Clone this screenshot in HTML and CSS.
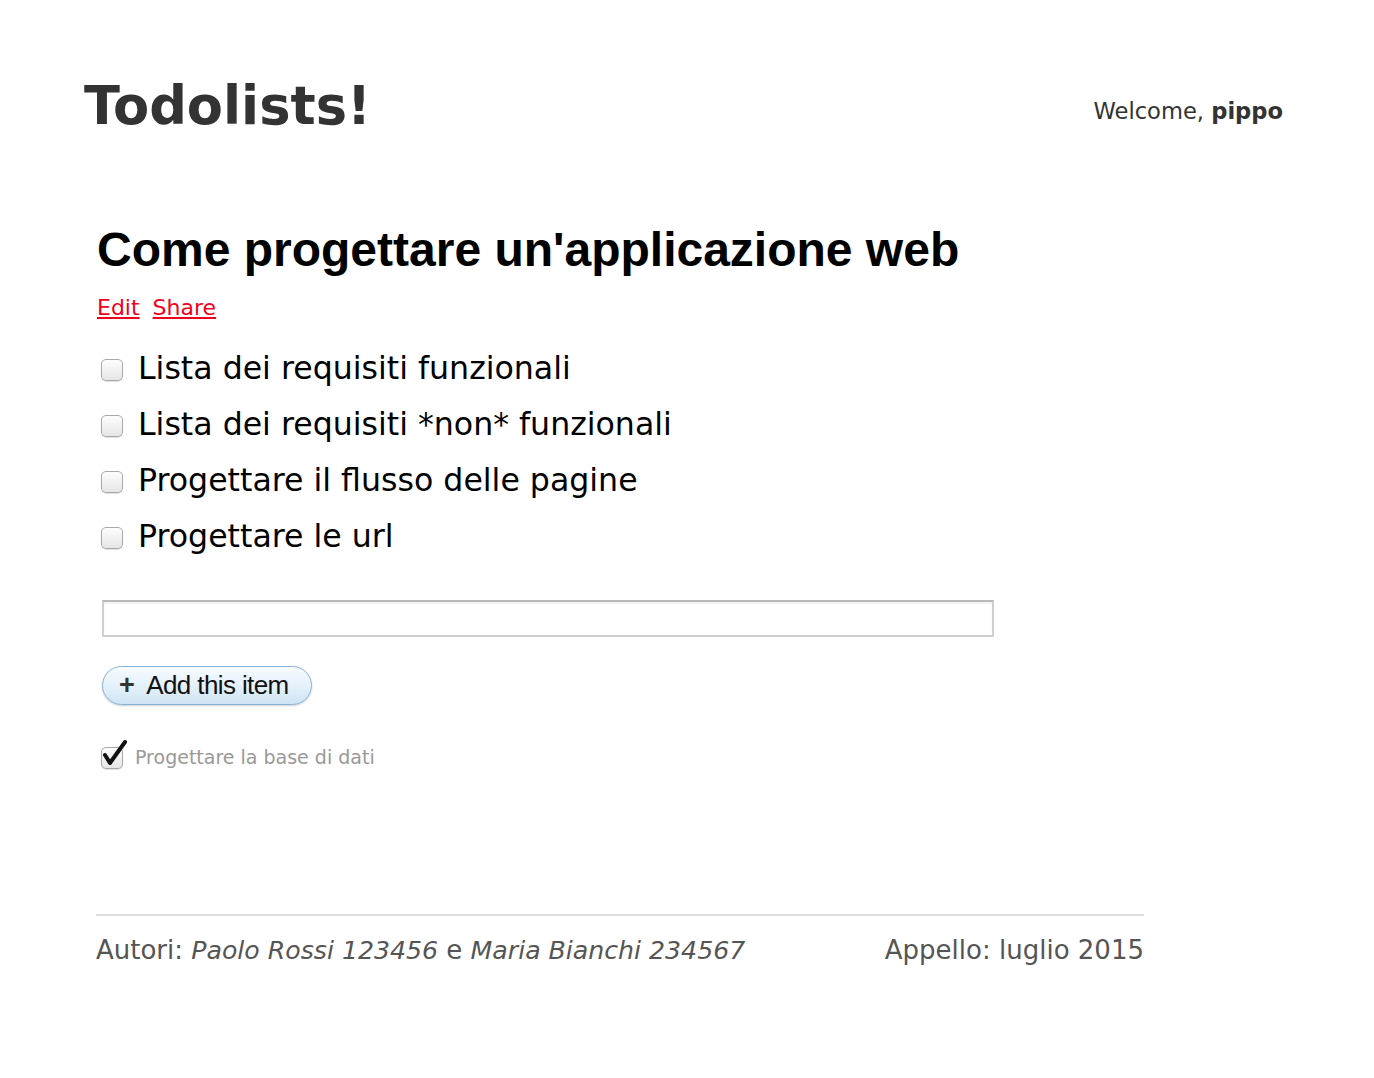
FILE: index.html
```html
<!DOCTYPE html>
<html lang="it">
<head>
<meta charset="utf-8">
<title>Todolists!</title>
<link rel="stylesheet" href="styles.css">
</head>
<body>
<div class="page">
  <header class="top">
    <h1 class="brand">Todolists!</h1>
    <div class="welcome">Welcome, <b>pippo</b></div>
  </header>
  <main class="main">
    <h2 class="list-title">Come progettare un'applicazione web</h2>
    <div class="actions"><a href="#">Edit</a> <a href="#">Share</a></div>
    <ul class="items">
      <li class="item"><span class="cb"></span><span>Lista dei requisiti funzionali</span></li>
      <li class="item"><span class="cb"></span><span>Lista dei requisiti *non* funzionali</span></li>
      <li class="item"><span class="cb"></span><span>Progettare il flusso delle pagine</span></li>
      <li class="item"><span class="cb"></span><span>Progettare le url</span></li>
    </ul>
    <div class="add-form">
      <div class="text-input"></div>
      <button class="add-btn"><span class="plus">+</span>Add this item</button>
    </div>
    <ul class="done">
      <li class="done-item"><span class="cb small"><svg viewBox="0 0 28 28" width="28" height="28"><path d="M5 16 L10 24 L25 3" fill="none" stroke="#111" stroke-width="4" stroke-linecap="round" stroke-linejoin="round"/></svg></span><span>Progettare la base di dati</span></li>
    </ul>
  </main>
  <footer class="foot">
    <div>Autori: <i>Paolo Rossi 123456</i> e <i>Maria Bianchi 234567</i></div>
    <div>Appello: luglio 2015</div>
  </footer>
</div>
</body>
</html>
```
FILE: styles.css
```css
body {
  margin: 0;
  background: #fff;
  font-family: "DejaVu Sans", Verdana, sans-serif;
}
.page {
  width: 1374px;
}
.top {
  display: flex;
  justify-content: space-between;
  align-items: flex-start;
  padding: 74px 91px 0 84px;
}
.brand {
  margin: 0;
  font-family: "DejaVu Sans", sans-serif;
  font-weight: bold;
  font-size: 52.7px;
  color: #333;
  line-height: 64px;
}
.welcome {
  font-size: 22.6px;
  color: #333;
  margin-top: 24px;
}
.main {
  padding: 0 0 0 97px;
}
.list-title {
  margin: 84px 0 0;
  font-family: "Liberation Sans", Arial, sans-serif;
  font-weight: bold;
  font-size: 48px;
  line-height: 56px;
  color: #000;
}
.actions {
  margin-top: 17px;
  font-size: 22px;
  line-height: 26px;
}
.actions a {
  color: #f0001c;
  margin-right: 6px;
}
.items {
  list-style: none;
  margin: 19px 0 0;
  padding: 0;
}
.item {
  display: flex;
  align-items: center;
  height: 56px;
  font-size: 31.6px;
  color: #000;
}
.cb {
  display: inline-block;
  position: relative;
  width: 20px;
  height: 20px;
  border: 1px solid #a9a9a9;
  border-radius: 5px;
  background: linear-gradient(#fdfdfd, #e6e6e6);
  box-shadow: 0 1px 1px rgba(0,0,0,0.12);
  margin: 3px 15px 0 4px;
  flex: none;
}
.cb svg {
  position: absolute;
  left: -2px;
  top: -9px;
}
.add-form {
  margin-top: 36px;
}
.text-input {
  width: 888px;
  height: 33px;
  margin-left: 5px;
  border: 2px solid #cfcfcf;
  border-top-color: #b9b9b9;
  box-shadow: inset 0 2px 2px rgba(0,0,0,0.06);
}
.add-btn {
  display: flex;
  align-items: center;
  margin: 29px 0 0 5px;
  width: 210px;
  height: 39px;
  border: 1px solid #86b3d8;
  border-radius: 20px;
  background: linear-gradient(#f7fbfe, #e3f0fa 55%, #cfe4f4);
  box-shadow: 0 1px 2px rgba(0,0,0,0.2);
  font-family: "Liberation Sans", Arial, sans-serif;
  font-size: 26px;
  color: #111;
  padding: 0 0 0 16px;
  letter-spacing: -0.6px;
}
.plus {
  font-size: 27px;
  font-weight: bold;
  margin-right: 12px;
  color: #333;
}
.done {
  list-style: none;
  margin: 39px 0 0;
  padding: 0;
}
.done-item {
  display: flex;
  align-items: center;
  font-size: 19px;
  color: #999;
}
.cb.small {
  margin-right: 12px;
}
.foot {
  display: flex;
  justify-content: space-between;
  margin: 145px 0 0 96px;
  width: 1048px;
  border-top: 2px solid #ddd;
  padding-top: 19px;
  font-size: 26px;
  color: #555;
}
.foot i {
  font-size: 25.2px;
}
```
